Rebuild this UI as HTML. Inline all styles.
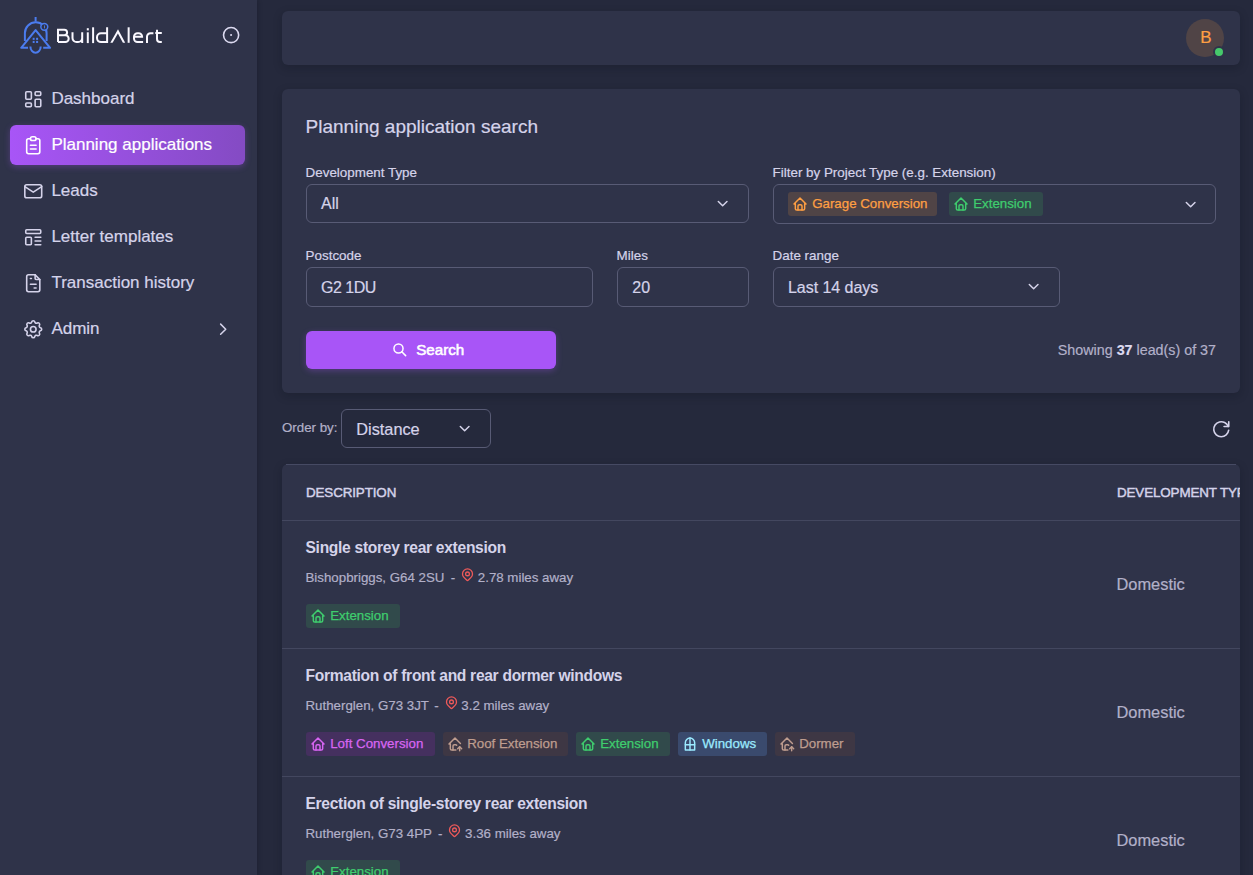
<!DOCTYPE html>
<html><head><meta charset="utf-8">
<style>
*{box-sizing:border-box;margin:0;padding:0}
html,body{width:1253px;height:875px;overflow:hidden;background:#25293c;font-family:"Liberation Sans",sans-serif}
.a{position:absolute;display:block}
.t{position:absolute;white-space:nowrap;-webkit-text-stroke:0.2px currentColor}
.card{position:absolute;left:282px;width:958px;background:#2f3349;border-radius:6px;box-shadow:0 3px 10px rgba(10,12,25,.22)}
.box{position:absolute;border:1px solid #585b75;border-radius:6px}
.chip{position:absolute;height:24px;border-radius:3px}
.hr{position:absolute;left:282px;width:958px;height:1px;background:#43475f}
</style></head><body>

<div class="a" style="left:0;top:0;width:257px;height:875px;background:#2f3349;box-shadow:1px 0 4px rgba(10,12,25,.25)"></div>
<svg class="a" style="left:0;top:0" width="60" height="60" viewBox="0 0 60 60" fill="none" stroke="#4b7cee" stroke-width="2">
<path d="M35.6 17v4.6"/>
<path d="M24.9 41V33.1a10.85 10.85 0 0 1 21.7 0V41"/>
<path d="M28 47.8H21.2L35.6 30.1L50.1 47.8H43.2" stroke-linejoin="round"/>
<path d="M30.4 46.4a5.15 6.3 0 0 0 10.3 0"/>
<circle cx="44.3" cy="26.85" r="3.45" fill="#2f3349" stroke-width="1.5"/>
<path d="M44.5 25.4v3" stroke-width="0.9"/>
<g fill="#4b7cee" stroke="none"><rect x="32.7" y="37.8" width="1.9" height="2.1"/><rect x="36.1" y="37.8" width="2.0" height="2.1"/><rect x="32.7" y="40.9" width="1.9" height="2.1"/><rect x="36.1" y="40.9" width="2.0" height="2.1"/></g>
</svg>
<svg class="a" style="left:0;top:0" width="170" height="60" viewBox="0 0 170 60" fill="none" stroke="#faf8ff" stroke-width="2">
<path d="M58 42.1V29.7h6.3a2.8 2.8 0 0 1 0 5.6H58M64.3 35.3h1a3.4 3.4 0 0 1 0 6.8H58"/>
<path d="M72.5 32.3V38a4.1 4.1 0 0 0 4.1 4.1h1.5a4.1 4.1 0 0 0 4.1-4.1V32.3M82.2 38v5.1"/>
<path d="M87.8 32.3v10.8"/>
<path d="M93.1 27.3v15.8"/>
<path d="M107.1 33.3H101a4 4 0 0 0-4 4v.8a4 4 0 0 0 4 4h6.1M107.1 27.3v15.8"/>
<path d="M128.65 27.3v15.5"/>
<path d="M134 36.85h8.1V36.8a3.5 3.5 0 0 0-3.5-3.5h-1.1a3.5 3.5 0 0 0-3.5 3.5v1.7a3.5 3.5 0 0 0 3.5 3.5h5.6"/>
<path d="M147 43V36.8a3.5 3.5 0 0 1 3.5-3.5h2.9"/>
<path d="M157 29.7V39a3 3 0 0 0 3 3h1.8M155.3 33h6.5"/>
<g fill="#faf8ff" stroke="none"><rect x="86.8" y="28.2" width="2" height="2.2"/><polygon points="110.3,42.8 118,29.2 125.2,42.8 122.9,42.8 117.9,33.4 112.6,42.8"/></g>
</svg>
<svg class="a" style="left:221.0px;top:25.0px" width="20.2" height="20.2" viewBox="0 0 24 24" fill="none" stroke="#dcdaf0" stroke-width="1.9" stroke-linecap="round" stroke-linejoin="round"><circle cx="12" cy="12" r="9"/><circle cx="12" cy="12" r="1.2" fill="#dcdaf0" stroke="none"/></svg>
<svg class="a" style="left:21.8px;top:87.75px" width="22.5" height="22.5" viewBox="0 0 24 24" fill="none" stroke="#d5d3ea" stroke-width="1.7" stroke-linecap="round" stroke-linejoin="round"><path d="M5 4h4a1 1 0 0 1 1 1v6a1 1 0 0 1-1 1H5a1 1 0 0 1-1-1V5a1 1 0 0 1 1-1"/><path d="M5 16h4a1 1 0 0 1 1 1v2a1 1 0 0 1-1 1H5a1 1 0 0 1-1-1v-2a1 1 0 0 1 1-1"/><path d="M15 12h4a1 1 0 0 1 1 1v6a1 1 0 0 1-1 1h-4a1 1 0 0 1-1-1v-6a1 1 0 0 1 1-1"/><path d="M15 4h4a1 1 0 0 1 1 1v2a1 1 0 0 1-1 1h-4a1 1 0 0 1-1-1V5a1 1 0 0 1 1-1"/></svg>
<div class="t" style="left:51.40px;top:89.61px;font-size:17px;line-height:17px;color:#d5d3ea;font-weight:normal;">Dashboard</div>
<div class="a" style="left:10px;top:125px;width:235px;height:40px;border-radius:6px;background:linear-gradient(270deg,rgba(168,85,247,.7),#a855f7);box-shadow:0 2px 6px rgba(168,85,247,.3)"></div>
<svg class="a" style="left:21.8px;top:133.75px" width="22.5" height="22.5" viewBox="0 0 24 24" fill="none" stroke="#ffffff" stroke-width="1.7" stroke-linecap="round" stroke-linejoin="round"><path d="M9 5H7a2 2 0 0 0-2 2v12a2 2 0 0 0 2 2h10a2 2 0 0 0 2-2V7a2 2 0 0 0-2-2h-2"/><path d="M9 5a2 2 0 0 1 2-2h2a2 2 0 0 1 2 2v0a2 2 0 0 1-2 2h-2a2 2 0 0 1-2-2z"/><path d="M9 12h6"/><path d="M9 16h6"/></svg>
<div class="t" style="left:51.40px;top:135.61px;font-size:17px;line-height:17px;color:#ffffff;font-weight:normal;">Planning applications</div>
<svg class="a" style="left:21.8px;top:179.75px" width="22.5" height="22.5" viewBox="0 0 24 24" fill="none" stroke="#d5d3ea" stroke-width="1.7" stroke-linecap="round" stroke-linejoin="round"><path d="M3 7a2 2 0 0 1 2-2h14a2 2 0 0 1 2 2v10a2 2 0 0 1-2 2H5a2 2 0 0 1-2-2V7z"/><path d="M3 7l9 6 9-6"/></svg>
<div class="t" style="left:51.40px;top:181.61px;font-size:17px;line-height:17px;color:#d5d3ea;font-weight:normal;">Leads</div>
<svg class="a" style="left:21.8px;top:225.75px" width="22.5" height="22.5" viewBox="0 0 24 24" fill="none" stroke="#d5d3ea" stroke-width="1.7" stroke-linecap="round" stroke-linejoin="round"><path d="M5 4h14a1 1 0 0 1 1 1v2a1 1 0 0 1-1 1H5a1 1 0 0 1-1-1V5a1 1 0 0 1 1-1z"/><path d="M5 12h4a1 1 0 0 1 1 1v6a1 1 0 0 1-1 1H5a1 1 0 0 1-1-1v-6a1 1 0 0 1 1-1z"/><path d="M14 12h6"/><path d="M14 16h6"/><path d="M14 20h6"/></svg>
<div class="t" style="left:51.40px;top:227.61px;font-size:17px;line-height:17px;color:#d5d3ea;font-weight:normal;">Letter templates</div>
<svg class="a" style="left:21.8px;top:271.75px" width="22.5" height="22.5" viewBox="0 0 24 24" fill="none" stroke="#d5d3ea" stroke-width="1.7" stroke-linecap="round" stroke-linejoin="round"><path d="M14 3v4a1 1 0 0 0 1 1h4"/><path d="M17 21H7a2 2 0 0 1-2-2V5a2 2 0 0 1 2-2h7l5 5v11a2 2 0 0 1-2 2z"/><path d="M9 7h1"/><path d="M9 13h6"/><path d="M13 17h2"/></svg>
<div class="t" style="left:51.40px;top:273.61px;font-size:17px;line-height:17px;color:#d5d3ea;font-weight:normal;">Transaction history</div>
<svg class="a" style="left:21.8px;top:317.75px" width="22.5" height="22.5" viewBox="0 0 24 24" fill="none" stroke="#d5d3ea" stroke-width="1.7" stroke-linecap="round" stroke-linejoin="round"><path d="M10.325 4.317c.426-1.756 2.924-1.756 3.35 0a1.724 1.724 0 0 0 2.573 1.066c1.543-.94 3.31.826 2.37 2.37a1.724 1.724 0 0 0 1.065 2.572c1.756.426 1.756 2.924 0 3.35a1.724 1.724 0 0 0-1.066 2.573c.94 1.543-.826 3.31-2.37 2.37a1.724 1.724 0 0 0-2.572 1.065c-.426 1.756-2.924 1.756-3.35 0a1.724 1.724 0 0 0-2.573-1.066c-1.543.94-3.31-.826-2.37-2.37a1.724 1.724 0 0 0-1.065-2.572c-1.756-.426-1.756-2.924 0-3.35a1.724 1.724 0 0 0 1.066-2.573c-.94-1.543.826-3.31 2.37-2.37 1 .608 2.296.07 2.572-1.065z"/><path d="M9 12a3 3 0 1 0 6 0a3 3 0 0 0-6 0"/></svg>
<div class="t" style="left:51.40px;top:319.61px;font-size:17px;line-height:17px;color:#d5d3ea;font-weight:normal;">Admin</div>
<svg class="a" style="left:213.3px;top:319.3px" width="20.4" height="20.4" viewBox="0 0 24 24" fill="none" stroke="#d5d3ea" stroke-width="1.8" stroke-linecap="round" stroke-linejoin="round"><path d="M9 6l6 6-6 6"/></svg>
<div class="card" style="top:11px;height:54px"></div>
<div class="a" style="left:1186px;top:18.8px;width:38px;height:38px;border-radius:50%;background:#504446"></div>
<div class="t" style="left:1200.20px;top:28.81px;font-size:17px;line-height:17px;color:#ff9f43;font-weight:normal;">B</div>
<div class="a" style="left:1213px;top:46px;width:12px;height:12px;border-radius:50%;background:#46c96b;border:2px solid #2f3349"></div>
<div class="card" style="top:89px;height:304px"></div>
<div class="t" style="left:305.60px;top:116.82px;font-size:19px;line-height:19px;color:#d5d3ea;font-weight:normal;">Planning application search</div>
<div class="t" style="left:305.60px;top:165.56px;font-size:13.4px;line-height:13.4px;color:#d5d3ea;font-weight:normal;">Development Type</div>
<div class="box" style="left:306px;top:184px;width:443px;height:39px"></div>
<div class="t" style="left:321.00px;top:196.16px;font-size:16px;line-height:16px;color:#d5d3ea;font-weight:normal;">All</div>
<svg class="a" style="left:714.1px;top:194.5px" width="17.3" height="17.3" viewBox="0 0 24 24" fill="none" stroke="#d5d3ea" stroke-width="2.1" stroke-linecap="round" stroke-linejoin="round"><path d="M6 9l6 6 6-6"/></svg>
<div class="t" style="left:772.60px;top:165.86px;font-size:13.4px;line-height:13.4px;color:#d5d3ea;font-weight:normal;">Filter by Project Type (e.g. Extension)</div>
<div class="box" style="left:773px;top:184px;width:443px;height:40px"></div>
<div class="chip" style="left:788px;top:192px;width:149px;background:#504446"></div><svg class="a" style="left:791.9px;top:195.7px" width="16" height="16" viewBox="0 0 24 24" fill="none" stroke="#ff9f43" stroke-width="2.2" stroke-linecap="round" stroke-linejoin="round"><path d="M5 12H3l9-9 9 9h-2"/><path d="M5 12v7a2 2 0 0 0 2 2h10a2 2 0 0 0 2-2v-7"/><path d="M9 21v-6a2 2 0 0 1 2-2h2a2 2 0 0 1 2 2v6"/></svg><div class="t" style="left:812.20px;top:197.34px;font-size:13.3px;line-height:13.3px;color:#ff9f43;font-weight:normal;-webkit-text-stroke:0.25px #ff9f43">Garage Conversion</div>
<div class="chip" style="left:949px;top:192px;width:94px;background:#314a4b"></div><svg class="a" style="left:952.9px;top:195.7px" width="16" height="16" viewBox="0 0 24 24" fill="none" stroke="#3fcd6e" stroke-width="2.2" stroke-linecap="round" stroke-linejoin="round"><path d="M5 12H3l9-9 9 9h-2"/><path d="M5 12v7a2 2 0 0 0 2 2h10a2 2 0 0 0 2-2v-7"/><path d="M9 21v-6a2 2 0 0 1 2-2h2a2 2 0 0 1 2 2v6"/></svg><div class="t" style="left:973.20px;top:197.34px;font-size:13.3px;line-height:13.3px;color:#3fcd6e;font-weight:normal;-webkit-text-stroke:0.25px #3fcd6e">Extension</div>
<svg class="a" style="left:1181.8px;top:195.5px" width="17.3" height="17.3" viewBox="0 0 24 24" fill="none" stroke="#d5d3ea" stroke-width="2.1" stroke-linecap="round" stroke-linejoin="round"><path d="M6 9l6 6 6-6"/></svg>
<div class="t" style="left:305.60px;top:248.96px;font-size:13.4px;line-height:13.4px;color:#d5d3ea;font-weight:normal;">Postcode</div>
<div class="box" style="left:306px;top:267px;width:287px;height:40px"></div>
<div class="t" style="left:321.00px;top:279.56px;font-size:16px;line-height:16px;color:#d5d3ea;font-weight:normal;letter-spacing:-0.5px">G2 1DU</div>
<div class="t" style="left:616.60px;top:248.96px;font-size:13.4px;line-height:13.4px;color:#d5d3ea;font-weight:normal;">Miles</div>
<div class="box" style="left:617px;top:267px;width:132px;height:40px"></div>
<div class="t" style="left:632.30px;top:279.56px;font-size:16px;line-height:16px;color:#d5d3ea;font-weight:normal;">20</div>
<div class="t" style="left:772.60px;top:248.96px;font-size:13.4px;line-height:13.4px;color:#d5d3ea;font-weight:normal;">Date range</div>
<div class="box" style="left:773px;top:267px;width:287px;height:40px"></div>
<div class="t" style="left:788.00px;top:279.86px;font-size:16px;line-height:16px;color:#d5d3ea;font-weight:normal;letter-spacing:-0.05px">Last 14 days</div>
<svg class="a" style="left:1024.9px;top:278.3px" width="17.3" height="17.3" viewBox="0 0 24 24" fill="none" stroke="#d5d3ea" stroke-width="2.1" stroke-linecap="round" stroke-linejoin="round"><path d="M6 9l6 6 6-6"/></svg>
<div class="a" style="left:306px;top:331px;width:250px;height:38px;border-radius:6px;background:#a855f7;box-shadow:0 2px 6px rgba(168,85,247,.3)"></div>
<svg class="a" style="left:391.9px;top:342.2px" width="15.6" height="15.6" viewBox="0 0 24 24" fill="none" stroke="#ffffff" stroke-width="2.3" stroke-linecap="round" stroke-linejoin="round"><path d="M3 10a7 7 0 1 0 14 0a7 7 0 1 0-14 0"/><path d="M21 21l-6-6"/></svg>
<div class="t" style="left:416.20px;top:342.33px;font-size:15.2px;line-height:15.2px;color:#ffffff;font-weight:normal;-webkit-text-stroke:0.55px #fff">Search</div>
<div class="t" style="right:37px;top:343.20px;font-size:14.3px;line-height:14.3px;color:#b2b0c8">Showing <b style="color:#dcdaf0">37</b> lead(s) of 37</div>
<div class="t" style="left:282.00px;top:421.34px;font-size:13.3px;line-height:13.3px;color:#b2b0c8;font-weight:normal;">Order by:</div>
<div class="box" style="left:341px;top:409px;width:150px;height:39px"></div>
<div class="t" style="left:356.30px;top:421.00px;font-size:16.3px;line-height:16.3px;color:#d5d3ea;font-weight:normal;">Distance</div>
<svg class="a" style="left:456.4px;top:420.1px" width="17.3" height="17.3" viewBox="0 0 24 24" fill="none" stroke="#d5d3ea" stroke-width="2.1" stroke-linecap="round" stroke-linejoin="round"><path d="M6 9l6 6 6-6"/></svg>
<svg class="a" style="left:1209.7px;top:417.9px" width="22.5" height="22.5" viewBox="0 0 24 24" fill="none" stroke="#d5d3ea" stroke-width="1.7" stroke-linecap="round" stroke-linejoin="round"><path d="M19.933 13.041a8 8 0 1 1-9.925-8.788c3.899-1 7.935 1.007 9.425 4.747"/><path d="M20 4v5h-5"/></svg>
<div class="card" style="top:464px;height:420px;border-radius:6px 6px 0 0"></div>
<div class="a" style="left:286px;top:464px;width:950px;height:1px;background:#464a63"></div>
<div class="t" style="left:306.00px;top:485.96px;font-size:13.4px;line-height:13.4px;color:#d5d3ea;font-weight:normal;letter-spacing:-0.12px;-webkit-text-stroke:0.45px #d5d3ea">DESCRIPTION</div>
<div class="t" style="left:1117.00px;top:485.96px;font-size:13.4px;line-height:13.4px;color:#d5d3ea;font-weight:normal;letter-spacing:-0.12px;-webkit-text-stroke:0.45px #d5d3ea"><span style="display:inline-block;width:122.6px;overflow:hidden;vertical-align:top">DEVELOPMENT TYPE</span></div>
<div class="hr" style="top:520px"></div>
<div class="t" style="left:305.50px;top:540.29px;font-size:15.6px;line-height:15.6px;color:#d5d3ea;font-weight:bold;-webkit-text-stroke:0;letter-spacing:-0.3px">Single storey rear extension</div>
<div class="t" style="left:305.50px;top:570.54px;font-size:13.3px;line-height:13.3px;color:#b2b0c8;font-weight:normal;">Bishopbriggs, G64 2SU</div>
<div class="t" style="left:450.80px;top:571.04px;font-size:13.3px;line-height:13.3px;color:#b2b0c8;font-weight:normal;">-</div>
<svg class="a" style="left:460.0px;top:567px" width="15" height="15" viewBox="0 0 24 24" fill="none" stroke="#ee5a5a" stroke-width="2.1" stroke-linecap="round" stroke-linejoin="round"><path d="M9 11a3 3 0 1 0 6 0a3 3 0 0 0-6 0"/><path d="M17.657 16.657l-4.243 4.243a2 2 0 0 1-2.827 0l-4.244-4.243a8 8 0 1 1 11.314 0z"/></svg>
<div class="t" style="left:477.80px;top:571.04px;font-size:13.3px;line-height:13.3px;color:#b2b0c8;font-weight:normal;">2.78 miles away</div>
<div class="chip" style="left:306px;top:604px;width:94px;background:#314a4b"></div><svg class="a" style="left:309.9px;top:607.7px" width="16" height="16" viewBox="0 0 24 24" fill="none" stroke="#3fcd6e" stroke-width="2.2" stroke-linecap="round" stroke-linejoin="round"><path d="M5 12H3l9-9 9 9h-2"/><path d="M5 12v7a2 2 0 0 0 2 2h10a2 2 0 0 0 2-2v-7"/><path d="M9 21v-6a2 2 0 0 1 2-2h2a2 2 0 0 1 2 2v6"/></svg><div class="t" style="left:330.20px;top:609.34px;font-size:13.3px;line-height:13.3px;color:#3fcd6e;font-weight:normal;-webkit-text-stroke:0.25px #3fcd6e">Extension</div>
<div class="t" style="left:1116.50px;top:575.72px;font-size:16.4px;line-height:16.4px;color:#b2b0c8;font-weight:normal;">Domestic</div>
<div class="hr" style="top:648px"></div>
<div class="t" style="left:305.50px;top:668.29px;font-size:15.6px;line-height:15.6px;color:#d5d3ea;font-weight:bold;-webkit-text-stroke:0;letter-spacing:-0.3px">Formation of front and rear dormer windows</div>
<div class="t" style="left:305.50px;top:698.54px;font-size:13.3px;line-height:13.3px;color:#b2b0c8;font-weight:normal;">Rutherglen, G73 3JT</div>
<div class="t" style="left:434.30px;top:699.04px;font-size:13.3px;line-height:13.3px;color:#b2b0c8;font-weight:normal;">-</div>
<svg class="a" style="left:443.5px;top:695px" width="15" height="15" viewBox="0 0 24 24" fill="none" stroke="#ee5a5a" stroke-width="2.1" stroke-linecap="round" stroke-linejoin="round"><path d="M9 11a3 3 0 1 0 6 0a3 3 0 0 0-6 0"/><path d="M17.657 16.657l-4.243 4.243a2 2 0 0 1-2.827 0l-4.244-4.243a8 8 0 1 1 11.314 0z"/></svg>
<div class="t" style="left:461.30px;top:699.04px;font-size:13.3px;line-height:13.3px;color:#b2b0c8;font-weight:normal;">3.2 miles away</div>
<div class="chip" style="left:306px;top:732px;width:129px;background:#45305f"></div><svg class="a" style="left:309.9px;top:735.7px" width="16" height="16" viewBox="0 0 24 24" fill="none" stroke="#d865f2" stroke-width="2.2" stroke-linecap="round" stroke-linejoin="round"><path d="M5 12H3l9-9 9 9h-2"/><path d="M5 12v7a2 2 0 0 0 2 2h10a2 2 0 0 0 2-2v-7"/><path d="M9 21v-6a2 2 0 0 1 2-2h2a2 2 0 0 1 2 2v6"/></svg><div class="t" style="left:330.20px;top:737.34px;font-size:13.3px;line-height:13.3px;color:#d865f2;font-weight:normal;-webkit-text-stroke:0.25px #d865f2">Loft Conversion</div>
<div class="chip" style="left:443px;top:732px;width:125px;background:#3e3744"></div><svg class="a" style="left:446.9px;top:735.7px" width="16" height="16" viewBox="0 0 24 24" fill="none" stroke="#bf9d8f" stroke-width="2.2" stroke-linecap="round" stroke-linejoin="round"><path d="M9 21v-6a2 2 0 0 1 2-2h2c.641 0 1.212.302 1.578.771"/><path d="M20.136 11.136L12 3l-9 9h2v7a2 2 0 0 0 2 2h6.344"/><path d="M19 22v-6"/><path d="M22 19l-3-3-3 3"/></svg><div class="t" style="left:467.20px;top:737.34px;font-size:13.3px;line-height:13.3px;color:#bf9d8f;font-weight:normal;-webkit-text-stroke:0.25px #bf9d8f">Roof Extension</div>
<div class="chip" style="left:576px;top:732px;width:94px;background:#314a4b"></div><svg class="a" style="left:579.9px;top:735.7px" width="16" height="16" viewBox="0 0 24 24" fill="none" stroke="#3fcd6e" stroke-width="2.2" stroke-linecap="round" stroke-linejoin="round"><path d="M5 12H3l9-9 9 9h-2"/><path d="M5 12v7a2 2 0 0 0 2 2h10a2 2 0 0 0 2-2v-7"/><path d="M9 21v-6a2 2 0 0 1 2-2h2a2 2 0 0 1 2 2v6"/></svg><div class="t" style="left:600.20px;top:737.34px;font-size:13.3px;line-height:13.3px;color:#3fcd6e;font-weight:normal;-webkit-text-stroke:0.25px #3fcd6e">Extension</div>
<div class="chip" style="left:678px;top:732px;width:89px;background:#3a4a6d"></div><svg class="a" style="left:681.9px;top:735.7px" width="16" height="16" viewBox="0 0 24 24" fill="none" stroke="#9beaff" stroke-width="2.2" stroke-linecap="round" stroke-linejoin="round"><path d="M12 3c-3.866 0-7 3.272-7 7v11h14V10c0-3.728-3.134-7-7-7z"/><path d="M5 13h14"/><path d="M12 3v18"/></svg><div class="t" style="left:702.20px;top:737.34px;font-size:13.3px;line-height:13.3px;color:#9beaff;font-weight:normal;-webkit-text-stroke:0.25px #9beaff">Windows</div>
<div class="chip" style="left:775px;top:732px;width:80px;background:#3e3744"></div><svg class="a" style="left:778.9px;top:735.7px" width="16" height="16" viewBox="0 0 24 24" fill="none" stroke="#bf9d8f" stroke-width="2.2" stroke-linecap="round" stroke-linejoin="round"><path d="M9 21v-6a2 2 0 0 1 2-2h2c.641 0 1.212.302 1.578.771"/><path d="M20.136 11.136L12 3l-9 9h2v7a2 2 0 0 0 2 2h6.344"/><path d="M19 22v-6"/><path d="M22 19l-3-3-3 3"/></svg><div class="t" style="left:799.20px;top:737.34px;font-size:13.3px;line-height:13.3px;color:#bf9d8f;font-weight:normal;-webkit-text-stroke:0.25px #bf9d8f">Dormer</div>
<div class="t" style="left:1116.50px;top:703.72px;font-size:16.4px;line-height:16.4px;color:#b2b0c8;font-weight:normal;">Domestic</div>
<div class="hr" style="top:776px"></div>
<div class="t" style="left:305.50px;top:796.29px;font-size:15.6px;line-height:15.6px;color:#d5d3ea;font-weight:bold;-webkit-text-stroke:0;letter-spacing:-0.3px">Erection of single-storey rear extension</div>
<div class="t" style="left:305.50px;top:826.54px;font-size:13.3px;line-height:13.3px;color:#b2b0c8;font-weight:normal;">Rutherglen, G73 4PP</div>
<div class="t" style="left:438.10px;top:827.04px;font-size:13.3px;line-height:13.3px;color:#b2b0c8;font-weight:normal;">-</div>
<svg class="a" style="left:447.29999999999995px;top:823px" width="15" height="15" viewBox="0 0 24 24" fill="none" stroke="#ee5a5a" stroke-width="2.1" stroke-linecap="round" stroke-linejoin="round"><path d="M9 11a3 3 0 1 0 6 0a3 3 0 0 0-6 0"/><path d="M17.657 16.657l-4.243 4.243a2 2 0 0 1-2.827 0l-4.244-4.243a8 8 0 1 1 11.314 0z"/></svg>
<div class="t" style="left:465.10px;top:827.04px;font-size:13.3px;line-height:13.3px;color:#b2b0c8;font-weight:normal;">3.36 miles away</div>
<div class="chip" style="left:306px;top:860px;width:94px;background:#314a4b"></div><svg class="a" style="left:309.9px;top:863.7px" width="16" height="16" viewBox="0 0 24 24" fill="none" stroke="#3fcd6e" stroke-width="2.2" stroke-linecap="round" stroke-linejoin="round"><path d="M5 12H3l9-9 9 9h-2"/><path d="M5 12v7a2 2 0 0 0 2 2h10a2 2 0 0 0 2-2v-7"/><path d="M9 21v-6a2 2 0 0 1 2-2h2a2 2 0 0 1 2 2v6"/></svg><div class="t" style="left:330.20px;top:865.34px;font-size:13.3px;line-height:13.3px;color:#3fcd6e;font-weight:normal;-webkit-text-stroke:0.25px #3fcd6e">Extension</div>
<div class="t" style="left:1116.50px;top:831.72px;font-size:16.4px;line-height:16.4px;color:#b2b0c8;font-weight:normal;">Domestic</div>
<div class="hr" style="top:904px"></div>
</body></html>
